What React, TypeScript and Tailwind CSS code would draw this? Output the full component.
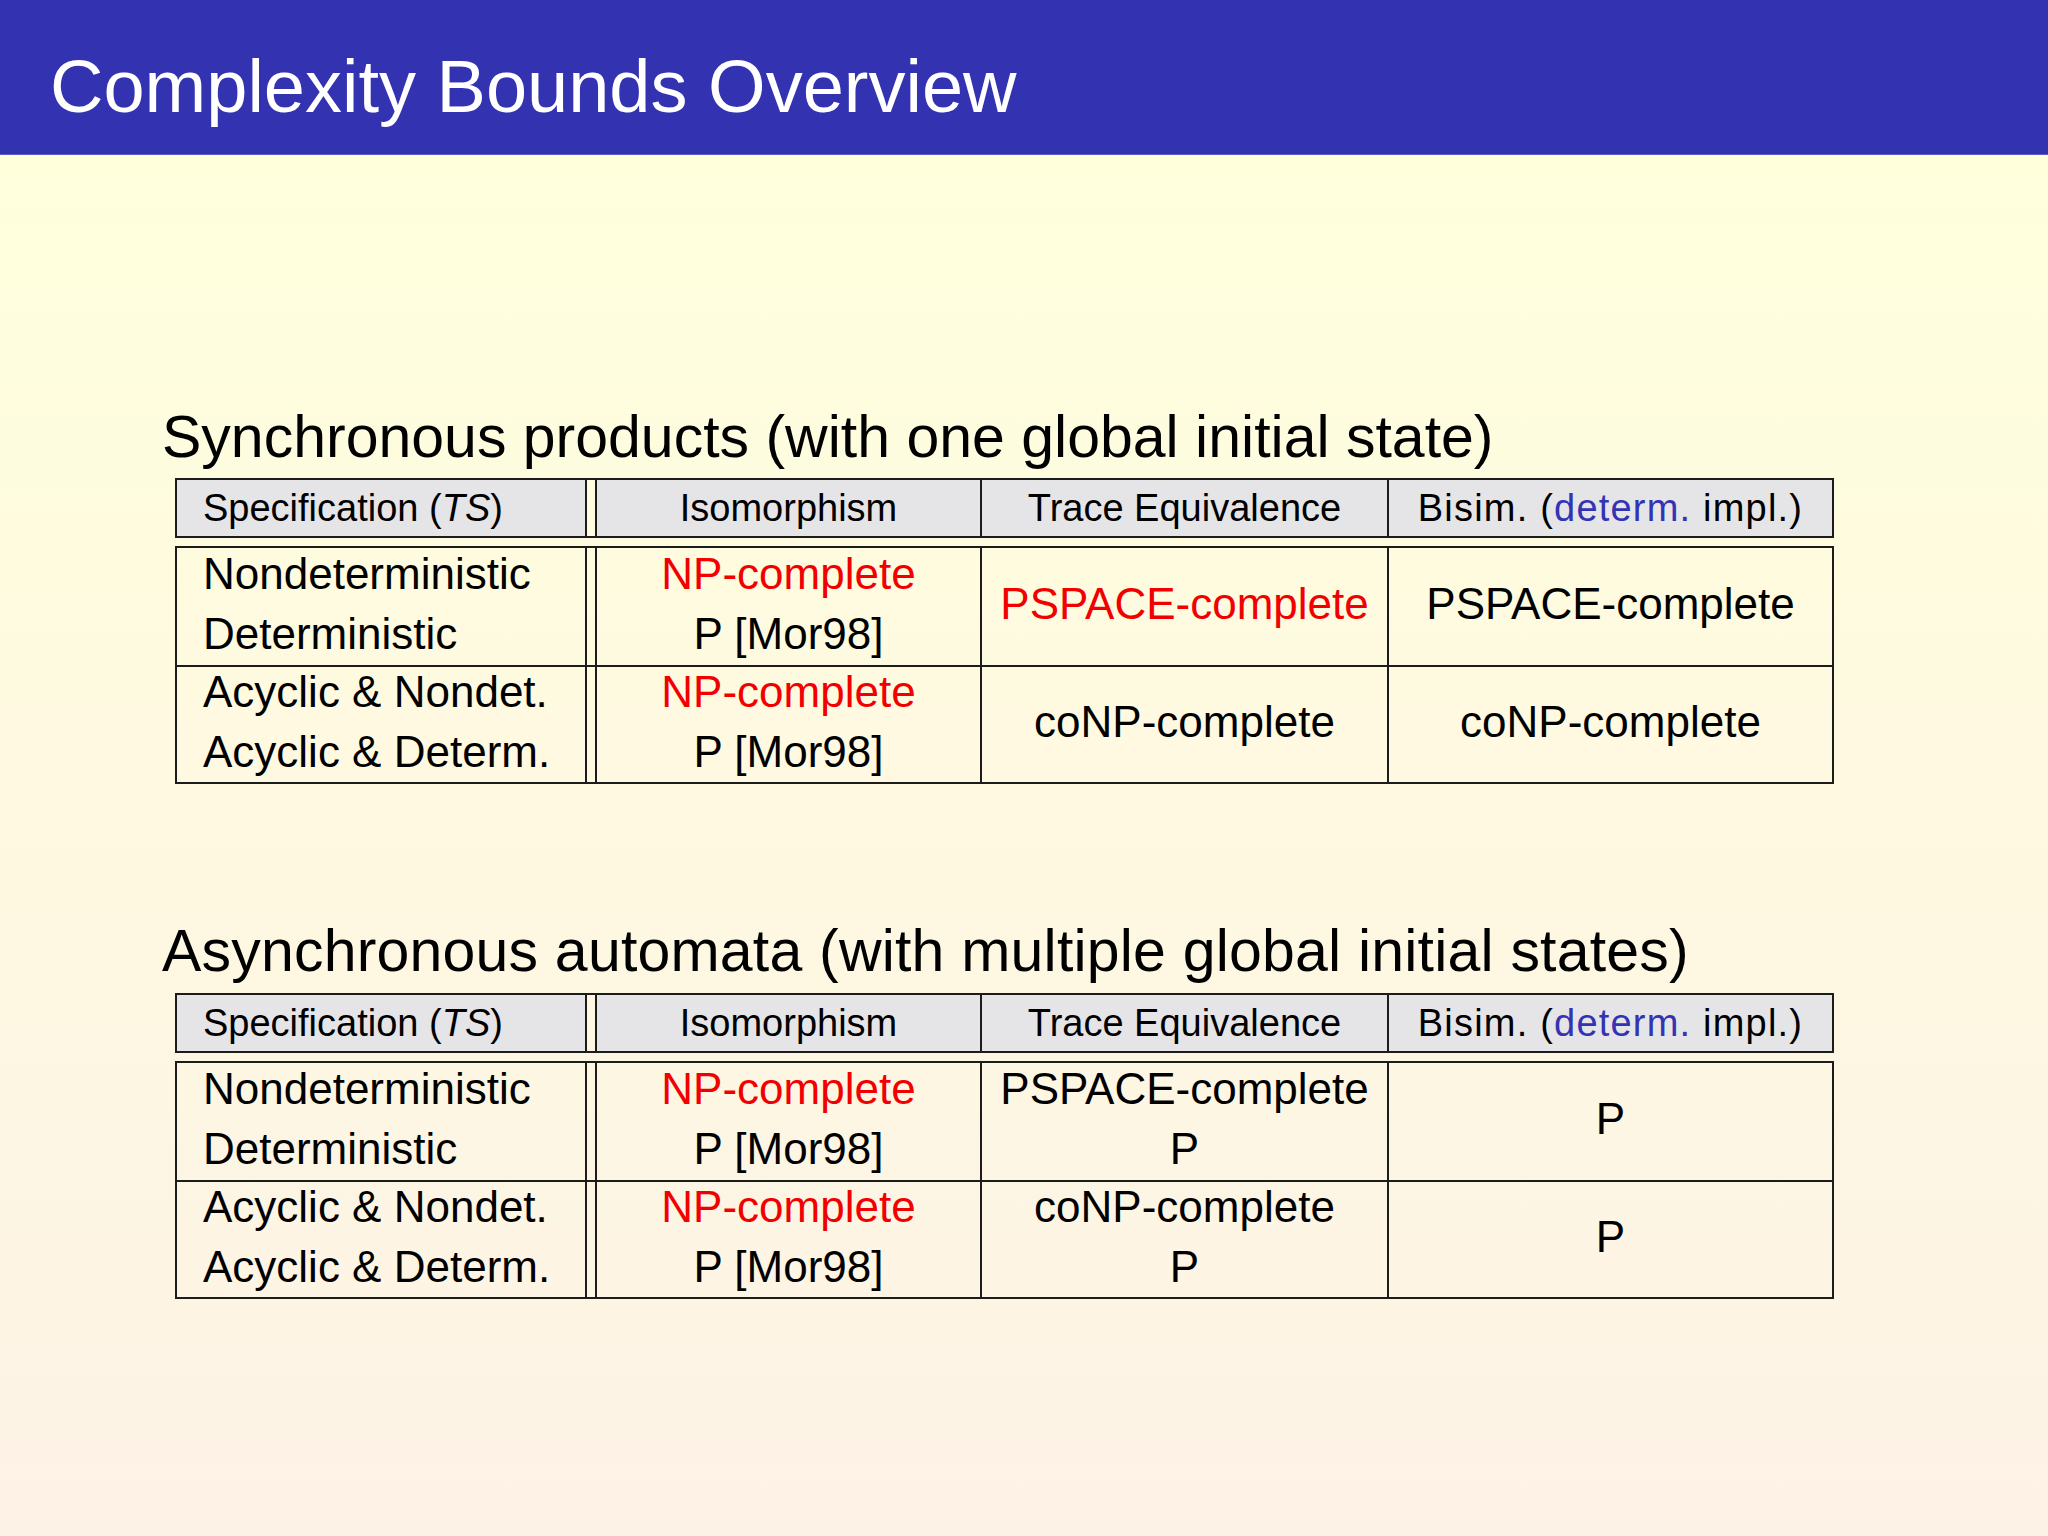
import type { ReactNode } from "react";

type Line = { text: ReactNode; red?: boolean };

interface RowData {
  spec: string[];
  iso: Line[];
  trace: Line[];
  bisim: Line[];
}

const LINE = "border-[#1c1c1c]";
const C1 = "w-[408px] shrink-0";
const SP = `w-[12px] shrink-0 border-x-2 ${LINE}`;
const C2 = "w-[383px] shrink-0";
const C3 = `w-[407px] shrink-0 border-l-2 ${LINE}`;
const C4 = `w-[445px] shrink-0 border-l-2 ${LINE}`;

const red = (text: string): Line => ({ text, red: true });
const plain = (text: string): Line => ({ text });

const syncRows: RowData[] = [
  {
    spec: ["Nondeterministic", "Deterministic"],
    iso: [red("NP-complete"), plain("P [Mor98]")],
    trace: [red("PSPACE-complete")],
    bisim: [plain("PSPACE-complete")],
  },
  {
    spec: ["Acyclic & Nondet.", "Acyclic & Determ."],
    iso: [red("NP-complete"), plain("P [Mor98]")],
    trace: [plain("coNP-complete")],
    bisim: [plain("coNP-complete")],
  },
];

const asyncRows: RowData[] = [
  {
    spec: ["Nondeterministic", "Deterministic"],
    iso: [red("NP-complete"), plain("P [Mor98]")],
    trace: [plain("PSPACE-complete"), plain("P")],
    bisim: [plain("P")],
  },
  {
    spec: ["Acyclic & Nondet.", "Acyclic & Determ."],
    iso: [red("NP-complete"), plain("P [Mor98]")],
    trace: [plain("coNP-complete"), plain("P")],
    bisim: [plain("P")],
  },
];

const Lines = ({ lines }: { lines: Line[] }) => (
  <>
    {lines.map((l, i) => (
      <div key={i} className={l.red ? "text-[#f20000]" : ""}>
        {l.text}
      </div>
    ))}
  </>
);

const cell = "flex flex-col justify-center pb-[6px] whitespace-nowrap";

const BoundsTable = ({ rows }: { rows: RowData[] }) => (
  <div className="ml-[13px]">
    {/* header row */}
    <div className={`flex w-[1659px] border-2 ${LINE} text-[38px] leading-[56px] whitespace-nowrap`}>
      <div className={`${C1} bg-[#e5e5e8] pl-[26px]`}>
        Specification (<span className="italic">TS</span>)
      </div>
      <div className={SP} />
      <div className={`${C2} bg-[#e5e5e8] text-center`}>Isomorphism</div>
      <div className={`${C3} bg-[#e5e5e8] text-center`}>Trace Equivalence</div>
      <div className={`${C4} bg-[#e5e5e8] text-center tracking-[1.2px]`}>
        Bisim. (<span className="text-[#3333b3]">determ.</span> impl.)
      </div>
    </div>

    {/* body */}
    <div className={`mt-[8px] w-[1659px] border-2 ${LINE} text-[44px] leading-[60px]`}>
      {rows.map((r, i) => (
        <div key={i} className={`flex h-[117px] ${i > 0 ? `border-t-2 ${LINE}` : ""}`}>
          <div className={`${C1} ${cell} pl-[26px]`}>
            {r.spec.map((s) => (
              <div key={s}>{s}</div>
            ))}
          </div>
          <div className={SP} />
          <div className={`${C2} ${cell} items-center`}>
            <Lines lines={r.iso} />
          </div>
          <div className={`${C3} ${cell} items-center`}>
            <Lines lines={r.trace} />
          </div>
          <div className={`${C4} ${cell} items-center`}>
            <Lines lines={r.bisim} />
          </div>
        </div>
      ))}
    </div>
  </div>
);

export default function App() {
  return (
    <div className="w-[2048px] h-[1536px] flex flex-col font-['Liberation_Sans',Arial,sans-serif] text-black">
      <div className="h-[155px] shrink-0 bg-[#3333b2] border-b border-[#5b5bc4] pl-[50px] pt-[50px] text-white text-[74px] leading-none">
        Complexity Bounds Overview
      </div>

      <div className="flex-1 bg-gradient-to-b from-[#ffffdc] to-[#fdf2e6] pl-[162px] pt-[253px]">
        <h2 className="text-[59px] leading-[59px] mb-[11px] whitespace-nowrap">
          Synchronous products (with one global initial state)
        </h2>
        <BoundsTable rows={syncRows} />

        <h2 className="mt-[138px] text-[59px] leading-[59px] mb-[12px] whitespace-nowrap tracking-[0.2px]">
          Asynchronous automata (with multiple global initial states)
        </h2>
        <BoundsTable rows={asyncRows} />
      </div>
    </div>
  );
}
